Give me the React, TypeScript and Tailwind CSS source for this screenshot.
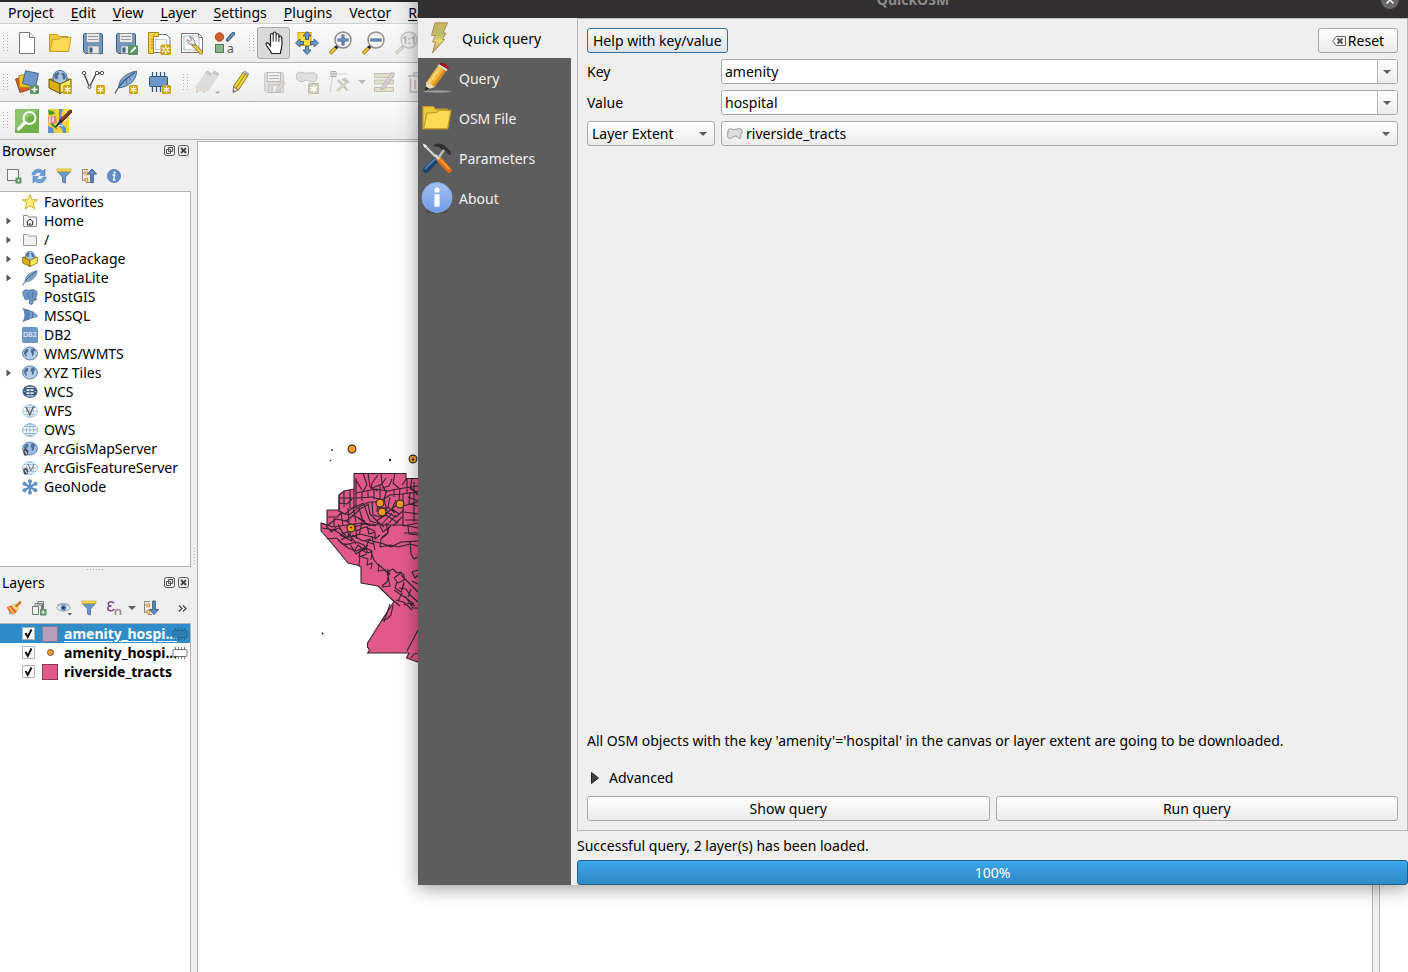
import React, { useState } from "react";

type P = { children?: React.ReactNode; size?: string; box?: string };

const Ico = ({ children, size = "size-6", box = "0 0 24 24" }: P) => (
  <svg viewBox={box} className={`${size} shrink-0`} fill="none" aria-hidden="true">
    {children}
  </svg>
);

/* Badges in the lower right corner of 24px icons */
const NewBadge = ({ c = "#c9a20e" }: { c?: string }) => (
  <g>
    <rect x="15" y="15" width="9" height="9" rx="1.5" fill={c} />
    <path d="M19.5 16.2v6.6M16.6 17.8l5.8 3.4M22.4 17.8l-5.8 3.4" stroke="#fff" strokeWidth="1.3" />
  </g>
);
const AddBadge = () => (
  <g>
    <rect x="15" y="15" width="9" height="9" rx="1.5" fill="#5b9163" />
    <path d="M19.5 16.5v6M16.5 19.5h6" stroke="#fff" strokeWidth="1.6" />
  </g>
);
const Floppy = ({ a = "#6c97c7", b = "#3f5f85", l = "#e8e8e8" }) => (
  <g>
    <path d="M3.5 2.5h17l1 1v19h-17l-2-2v-17z" fill={a} stroke={b} />
    <rect x="5.5" y="2.5" width="13" height="9" fill={l} stroke="#888" strokeWidth=".7" />
    <path d="M7 5.5h10M7 8.5h10" stroke="#999" strokeWidth="1.2" />
    <rect x="7" y="15" width="11" height="7.5" fill={l} stroke="#888" strokeWidth=".7" />
    <rect x="8.5" y="16.5" width="3" height="5" fill={b} />
  </g>
);
const Pen = ({ fill = "#f3d63a", edge = "#8a7a1c", tip = "#666" }) => (
  <g strokeLinejoin="round">
    <path d="M4.500 16.500L14 2.500l5 3L9.500 20z" fill={fill} stroke={edge} />
    <path d="M7 18L16.500 4" stroke={edge} strokeWidth="1" />
    <path d="M14 2.500l1.500-1.500 4 2.500-.5 2z" fill="#bcbcbc" stroke="#888" strokeWidth=".8" />
    <path d="M4.500 16.500L4 22.500 9.500 20z" fill="#e8d9b5" stroke={tip} strokeWidth=".8" />
    <path d="M4.300 20L4 22.800 6.500 21.500z" fill={tip} />
  </g>
);
const Lens = ({ c = "#f2f2f2", s = "#8a8a8a", h = "#f0c52c", d = "#222" }) => (
  <g>
    <path d="M2 22.500L8.500 16" stroke={d === "#222" ? "#7d6a1a" : "#c4c4c4"} strokeWidth="3.600" />
    <path d="M2.300 22.200L7.500 17" stroke={h} strokeWidth="2.200" />
    <path d="M7.500 17l2.500-2.500" stroke={d} strokeWidth="3" />
    <circle cx="15" cy="9" r="8" fill={c} stroke={s} strokeWidth="1.400" />
  </g>
);
/* Continents on a 16px globe */
const GlobeLand = () => (
  <path
    d="M2.500 4.500l2.500-1.700 1.700.7-.9 1.300.6 1-1.600.9-.8 1.500.9 1.300-.6 1.700-1.100-1.400L2 7.500zM9.300 2.800l2.500-.3 1.900 1.900-1 1.200-.9-.4.2 2.500-1.300 2.600-.9-1.300.1-2-1.300-.8z"
    fill="#4b6d96"
  />
);

const NewFile = () => (
  <Ico>
    <path d="M4.500 1.500h10l5 5v16h-15z" fill="#fff" stroke="#777" />
    <path d="M14.500 1.500v5h5" fill="#eee" stroke="#777" />
  </Ico>
);
const FolderArt = () => (
  <g>
    <path d="M1.500 3.500h8l1.500 2h9v15h-18.500z" fill="#f0c93c" stroke="#c49f28" />
    <path d="M4.500 8.500L12 8l1.500-1.500H23L20.500 20.500h-18.500z" fill="#fdda54" stroke="#c49f28" />
  </g>
);
const OpenFile = () => <Ico><FolderArt /></Ico>;
const Save = () => <Ico><Floppy /></Ico>;
const SaveAs = () => (
  <Ico>
    <Floppy />
    <rect x="14" y="14" width="10" height="10" rx="1.500" fill="#5b9163" />
    <path d="M16 22l1-2.500 4-4 1.500 1.500-4 4z" fill="#fff" />
  </Ico>
);
const Layout = () => (
  <Ico>
    <path d="M5.500 3.500h14l3.500 3.500v14.500h-17.500z" fill="#fff" stroke="#777" />
    <rect x="8.500" y="8.500" width="11" height="10" stroke="#b8c8e6" />
    <path d="M1.500 1.500h10v4h-5v17h-5z" fill="#f6d448" stroke="#a98a19" />
    <path d="M4 8h2.500M4 11h2.500M4 14h2.500M4 17h2.500M7 3.500v2" stroke="#a98a19" />
    <rect x="13.500" y="13.500" width="10.500" height="10.500" rx="1.500" fill="#c9a20e" />
    <path d="M18.700 14.500v8.500M15 16.600l7.400 4.300M22.400 16.600l-7.400 4.300" stroke="#fff" strokeWidth="1.500" />
    <circle cx="18.700" cy="18.700" r="1.200" fill="#c9a20e" />
  </Ico>
);
const LayoutMgr = () => (
  <Ico>
    <path d="M1.500 2.500h17l4 4v15h-21z" fill="#fff" stroke="#777" />
    <path d="M18.500 2.500v4h4" stroke="#777" />
    <rect x="4" y="5" width="15" height="14" stroke="#a9bde6" />
    <path d="M13 13l8 8.500" stroke="#8d7319" strokeWidth="4" strokeLinecap="round" />
    <path d="M14 14l7 7.500" stroke="#f0cd45" strokeWidth="2.400" strokeLinecap="round" />
    <path d="M9.500 5.500l3.500 1.500 1.500 3.500 1 4-3-1-3.500-.5L7 10.500l.5-2 2.500 2 1.500-1.500z" fill="#ececec" stroke="#777" strokeWidth=".9" />
  </Ico>
);
const Styles = () => (
  <Ico>
    <circle cx="6.500" cy="6" r="4.200" fill="#cf5f2f" stroke="#a54620" />
    <path d="M14.500 9L20.500 2.500" stroke="#3d5c80" strokeWidth="3.400" strokeLinecap="round" />
    <path d="M15 8.500L20.500 2.500" stroke="#6c97c7" strokeWidth="1.600" strokeLinecap="round" />
    <rect x="2.500" y="13.500" width="8" height="8" fill="#8ab38c" stroke="#4e7d52" />
    <text x="14" y="21.500" fontSize="12" fill="#555">a</text>
  </Ico>
);
const Hand = () => (
  <Ico>
    <path
      d="M8 22.500c-.500-2-2.500-4.500-5-8-1.500-2.500.5-3.500 2-2l2 2.500V4c0-2 2.500-2 2.700 0V2.500c0-2 2.700-2 2.900 0V4c.2-1.800 2.700-1.600 2.800.2v2c.4-1.500 2.600-1.300 2.800.3.300 3.500.8 7-.3 11-.5 1.500-.9 3-1 5z"
      fill="#fff" stroke="#222" strokeWidth="1.200" transform="translate(1.500 0)"
    />
    <path d="M11.200 4v6.500M14.100 4v6.500M16.900 6v5" stroke="#222" />
  </Ico>
);
const PanTo = () => (
  <Ico>
    <rect x="3" y="1.500" width="13" height="13" fill="#fdd93b" stroke="#c9a20e" />
    <path
      d="M12 .5l4 4.500h-2.500v3.500h-3V5H8zM12 23.500L8 19h2.500v-3.500h3V19H16zM.500 12L5 8v2.500h3.500v3H5V16zM23.500 12L19 16v-2.500h-3.500v-3H19V8z"
      fill="#6c97c7" stroke="#34567c" strokeWidth=".9"
    />
  </Ico>
);
const ZoomIn = () => (
  <Ico><Lens /><path d="M15 3.500v11M9.500 9h11" stroke="#34608f" strokeWidth="3" /><path d="M15 4v10M10 9h10" stroke="#6c97c7" strokeWidth="1.400" /></Ico>
);
const ZoomOut = () => (
  <Ico><Lens /><path d="M9.500 9h11" stroke="#34608f" strokeWidth="3" /><path d="M10 9h10" stroke="#6c97c7" strokeWidth="1.400" /></Ico>
);
const ZoomNative = () => (
  <Ico><Lens c="#efefef" s="#c6c6c6" h="#e2ddc8" d="#c4c4c4" /><text x="8" y="12.500" fontSize="10" fontWeight="700" fill="#b4b4b4">1:1</text></Ico>
);
const DataSource = () => (
  <Ico>
    <path d="M.500 9l9-2 5 12.500-9.500 3z" fill="#d2602f" stroke="#9c4520" />
    <path d="M4 5.500l10-1.500 1.500 13-11 .5z" fill="#f3cb27" stroke="#a98a19" />
    <path d="M10.500.800L23.500 3.500 20.500 17 7.500 13.500z" fill="#6c97c7" stroke="#44658c" />
    <AddBadge />
  </Ico>
);
const BoxArt = () => (
  <g>
    <path d="M1 9l11-3 11 3-11 5z" fill="#a98a19" />
    <circle cx="12" cy="7.500" r="7" fill="#a8c4e4" stroke="#53759d" />
    <path d="M7 3.500l3.500-1.500 1 2-2 2 1 2-2.500 1.500-2-3zM14 2.500l2.500 1 1.500 3.500-2 3-1.500-2 .5-2-2-1.500z" fill="#4b6d96" />
    <path d="M1 9l11 5v9.500L1 18z" fill="#d9ae12" stroke="#66540c" />
    <path d="M23 9l-11 5v9.500L23 18z" fill="#fbec5a" stroke="#66540c" />
  </g>
);
const NewGeoPackage = () => <Ico><BoxArt /><NewBadge /></Ico>;
const NewShape = () => (
  <Ico>
    <path d="M3 3.500L8.500 17 15.500 3h5" stroke="#39424e" strokeWidth="1.300" />
    <circle cx="3" cy="3" r="1.700" fill="#fff" stroke="#555" />
    <circle cx="8.500" cy="17" r="1.600" fill="#fff" stroke="#555" />
    <circle cx="16" cy="3" r="1.700" fill="#fff" stroke="#555" />
    <circle cx="21" cy="3" r="1.700" fill="#fff" stroke="#555" />
    <NewBadge />
  </Ico>
);
const FeatherArt = () => (
  <g>
    <path d="M5 18C4 10 11 3.500 22.500 1 23 8 17 15 9 17z" fill="#86abd3" stroke="#44658c" />
    <path d="M1 23.500C4 17 10 9 21 2.500" stroke="#34567c" strokeWidth="1.200" />
    <path d="M12 9l1 5M15 6.500l2 4" stroke="#44658c" strokeWidth=".8" />
  </g>
);
const NewSpatiaLite = () => <Ico><FeatherArt /><NewBadge /></Ico>;
const NewMemory = () => (
  <Ico>
    <path d="M5.500 2v20M9.500 2v20M13.500 2v20M17.500 2v20" stroke="#34567c" strokeWidth="1.300" />
    <rect x="2.500" y="6.500" width="18" height="10" rx="1" fill="#6c97c7" stroke="#34567c" />
    <NewBadge />
  </Ico>
);
const EditsGray = () => (
  <Ico>
    <g opacity=".6">
      <g transform="translate(-4 0)"><Pen fill="#d8d0d0" edge="#c9c1c1" tip="#bbb" /></g>
      <g transform="translate(3 0)"><Pen fill="#d8d0d0" edge="#c9c1c1" tip="#bbb" /></g>
    </g>
    <path d="M19 21.500h5l-2.500 2.500z" fill="#aaa" />
  </Ico>
);
const EditYellow = () => <Ico><Pen /></Ico>;
const SaveGray = () => (
  <Ico>
    <g opacity=".7"><Floppy a="#d3d3d3" b="#bdbdbd" l="#efefef" /></g>
    <path d="M13 23l1.500-4 6-8 2.500 2-6 8z" fill="#ded4d0" stroke="#c4bab8" strokeWidth=".8" />
  </Ico>
);
const PolyGray = () => (
  <Ico>
    <path d="M1.500 5c1-3.500 5-3 8-2 4 1 9-2 12 1.500 1.500 3-.5 7.500-3.500 7.500-4 0-5-3-9-1C5 13 .5 10 1.500 5z" fill="#dde0dd" stroke="#bcc0bc" />
    <rect x="13.500" y="13.500" width="10.500" height="10.500" rx="1.500" fill="#d0ccb8" stroke="#bdb9a6" />
    <path d="M18.700 15v7.500M15.500 17l6.400 3.700M21.900 17l-6.400 3.700" stroke="#fff" strokeWidth="1.500" />
  </Ico>
);
const VertexGray = () => (
  <Ico>
    <path d="M7 4h12M5 6L2 22" stroke="#cfcfcf" />
    <path d="M3 1.500h5v5H3z" fill="#eee" stroke="#aaa" />
    <circle cx="5.500" cy="4" r="1" stroke="#999" strokeWidth=".8" />
    <path d="M10 10l9.500 10.500" stroke="#c5c5b8" strokeWidth="2.400" />
    <path d="M9 21l9-8" stroke="#d6d3bf" strokeWidth="3" />
    <path d="M13 9.500l4-2 5 5-3 1z" fill="#c9c9c2" />
  </Ico>
);
const AttrGray = () => (
  <Ico>
    <path d="M1.500 3.500h19v4h-19zM1.500 10h19v4h-19zM1.500 17.500h19v4h-19z" fill="#e2dfcb" stroke="#c3c0ad" />
    <path d="M8 20l1-4L19 2l3 2L12 18z" fill="#d8d0cf" stroke="#b8b2b0" strokeWidth=".8" />
  </Ico>
);
const TrashGray = () => (
  <Ico>
    <path d="M2 6h20M8 6V3h8v3M4.500 8v14h15V8M9 10v9M13 10v9" stroke="#cdbcbc" strokeWidth="1.600" />
  </Ico>
);
const QuickSearch = () => (
  <Ico>
    <rect width="24" height="24" fill="#6fb04a" />
    <path d="M0 0h24L0 20z" fill="#8cc46a" />
    <circle cx="14.500" cy="9" r="6" stroke="#fff" strokeWidth="2" />
    <path d="M10 13.500L3.500 20" stroke="#fff" strokeWidth="3.200" strokeLinecap="round" />
  </Ico>
);
const OsmMap = () => (
  <Ico>
    <rect width="21" height="24" fill="#f7cf3f" />
    <path d="M11 0h4l-2 6 3 4-3 4 5 5v5h-3l-1-4-5-4 2-5zM0 17l5 2 1 5H0z" fill="#5b8fd6" />
    <path d="M0 1l5 1 2 3-6 1zM1 12l5 3 4 6-6-4z" fill="#3f9a3a" />
    <path d="M0 8l8-1 1 7-8 1z" fill="#d87f92" />
    <path d="M2 8v6M5 8v5M10 16l5 1M17 2l3 5M14 13l5-3" stroke="#fff" strokeWidth="1.200" />
    <path d="M22.500 2.500L13 12" stroke="#5c2408" strokeWidth="3.600" strokeLinecap="round" />
    <path d="M22 2.500L14 10.500" stroke="#98441a" strokeWidth="1.600" strokeLinecap="round" />
    <path d="M13.500 11.500L7.500 18" stroke="#222" strokeWidth="1.600" />
  </Ico>
);

/* 16px panel and tree icons */
const S = ({ children }: P) => <Ico size="size-4" box="0 0 16 16">{children}</Ico>;
const AddLayer = () => (
  <S><rect x="1.500" y="1.500" width="11" height="11" fill="#f4f4f4" stroke="#777" /><rect x="9.500" y="9.500" width="6" height="6" rx="1" fill="#5b9163" /><rect x="11.500" y="11.500" width="2" height="2" fill="#fff" /></S>
);
const Refresh = () => (
  <S>
    <path d="M1 7c0-5 7-8 11-4l2-2v6.500H8.500l2-2C8 3.500 4 4.500 4 7z" fill="#6c9fd8" stroke="#4a7db5" strokeWidth=".6" />
    <path d="M15 9c0 5-7 8-11 4l-2 2V8.500h5.500l-2 2C8 12.500 12 11.500 12 9z" fill="#6c9fd8" stroke="#4a7db5" strokeWidth=".6" />
  </S>
);
const Funnel = () => (
  <S>
    <path d="M1.500 3.500h13L9.500 9v6l-3-1V9z" fill="#6c97c7" stroke="#4a6f9a" strokeWidth=".8" />
    <rect x="1" y="1" width="14" height="2.600" fill="#f7dc55" stroke="#c9a20e" strokeWidth=".6" />
  </S>
);
const TreeArrow = ({ down = false }: { down?: boolean }) => (
  <S>
    <path d="M1.500 2v11M1.500 5h3M1.500 12h3M1 1.500h6M5 14.500h4" stroke="#8a8a8a" />
    <rect x="4" y="4" width="2.600" height="2.600" fill="#fff" stroke="#f0932b" strokeWidth="1.200" />
    <rect x="4" y="10.500" width="2.600" height="2.600" fill="#fff" stroke="#f0932b" strokeWidth="1.200" />
    <path d={down ? "M9.700 1h2.600v8.500H15.500L11 14.500 6.500 9.500h3.200z" : "M9.700 14.500h2.600V6H15.500L11 1 6.500 6h3.200z"} fill="#5f8fc6" stroke="#2f5179" strokeWidth=".9" />
  </S>
);
const InfoSmall = () => (
  <S><circle cx="8" cy="8" r="6.500" fill="#5d8fcb" stroke="#4672a8" strokeWidth=".8" /><circle cx="8.600" cy="4.600" r="1.100" fill="#fff" /><path d="M6.500 7h2.300L7.500 12h1.800" stroke="#fff" strokeWidth="1.300" /></S>
);
const Star = () => (
  <S><path d="M8 .5l2.100 5.200h5.500l-4.400 3.400 1.700 5.900L8 11.700 3.100 15l1.700-5.900L.400 5.700h5.500z" fill="#fdf07a" stroke="#c9a81c" strokeWidth=".9" /></S>
);
const FolderHome = () => (
  <S><path d="M1.500 2.500h4l1 1.500h8v9.500h-13z" fill="#f4f4f4" stroke="#8c8c8c" /><path d="M4.500 9L8 6l3.500 3M5.500 8.500V12h5V8.500" stroke="#333" /><path d="M8 10v2" stroke="#333" /></S>
);
const Folder = () => <S><path d="M1.500 2.500h4l1 1.500h8v9.500h-13z" fill="#f1f1f1" stroke="#9a9a9a" /></S>;
const GeoPkg = () => <Ico size="size-4"><BoxArt /></Ico>;
const Feather = () => <Ico size="size-4"><FeatherArt /></Ico>;
const PostGIS = () => (
  <S>
    <path d="M1 3c1-3 5-2 6-1.500 2-1 7-1.500 8 2 .3 2.500-1 5-2 6.500h2c-1 1.500-3 1.500-4 1v3c-.500 2-3.500 1.500-3.500 0V11L5.500 10c-1 1.500-2.500 1-3-1C1.500 7 .5 5 1 3z" fill="#6c97c7" stroke="#44658c" strokeWidth=".8" />
    <path d="M6 3.500C5.500 6 6 8 7.500 9M10.500 3c1 2 .5 4-.5 6" stroke="#44658c" strokeWidth=".8" />
  </S>
);
const MSSQL = () => (
  <S>
    <path d="M1 .5L6 2c2 3.500 1.500 6.500 0 9.500l-5 2C3.500 9.500 3.500 5 1 .5z" fill="#5b86b8" stroke="#3f6490" strokeWidth=".6" />
    <path d="M6 2l4 1.500c1 2.500 1 4.500 0 6.500l-4 1.500C7.500 8.500 8 5.500 6 2zM10 3.500c3 1 4.500 3 5.500 5L10 10c1-2 1-4 0-6.500z" fill="#7ba3d0" stroke="#3f6490" strokeWidth=".6" />
  </S>
);
const DB2 = () => (
  <S><rect width="16" height="16" rx="1.500" fill="#6c97c7" /><text x="1" y="10" fontSize="7" fill="#fff">DB2</text></S>
);
const GlobeMap = () => (
  <S>
    <ellipse cx="8" cy="7.500" rx="7.500" ry="6.500" fill="#b4cce8" stroke="#53759d" strokeWidth=".9" />
    <GlobeLand />
  </S>
);
const Grid = ({ c = "#6c97c7" }) => (
  <g stroke={c} strokeWidth=".9">
    <ellipse cx="8" cy="8" rx="7.400" ry="6.300" />
    <ellipse cx="8" cy="8" rx="3.500" ry="6.300" />
    <path d="M8 1.700v12.600M.6 8h14.800M2 4.500h12M2 11.500h12" />
  </g>
);
const WCS = () => (
  <S>
    <ellipse cx="8" cy="7.500" rx="7.500" ry="6.500" fill="#3f5b7c" />
    <path d="M4.500 3.300h7M4.500 11.800h7" stroke="#c9dcf2" strokeWidth="1.300" />
    <path d="M4.500 5.300h3v1.800h-3zM8.500 5.300h3v1.800h-3zM4.500 8.200h3V10h-3zM8.500 8.200h3V10h-3z" fill="#e6effa" />
    <path d="M1.500 7.600h2M12.500 7.600h2" stroke="#83abda" />
  </S>
);
const WFS = () => <S><Grid c="#9dbce0" /><path d="M4 4l4 8 3-8h2" stroke="#555" strokeWidth="1.200" /></S>;
const OWS = () => <S><Grid c="#83abda" /></S>;
const ArcMap = () => (
  <S><ellipse cx="8" cy="7.500" rx="7.500" ry="6.500" fill="#9dbce0" stroke="#53759d" strokeWidth=".8" /><GlobeLand /><path d="M1 9.500l3-2 2.500 2.500-1 4.500H2z" fill="#44525f" /><path d="M3 10l2 3" stroke="#fff" /></S>
);
const ArcFeat = () => (
  <S><Grid c="#9dbce0" /><path d="M6 4l3 7 3-7" stroke="#777" /><path d="M1 9.500l3-2 2.500 2.500-1 4.500H2z" fill="#44525f" /><path d="M3 10l2 3" stroke="#fff" /></S>
);
const GeoNode = () => (
  <S>
    <path d="M8 2v12M3 5l10 6M13 5L3 11" stroke="#5f8fc6" strokeWidth="2.200" />
    <g fill="#5f8fc6"><circle cx="8" cy="2.200" r="2" /><circle cx="8" cy="13.800" r="2" /><circle cx="2.500" cy="4.800" r="2" /><circle cx="13.500" cy="4.800" r="2" /><circle cx="2.500" cy="11.200" r="2" /><circle cx="13.500" cy="11.200" r="2" /></g>
  </S>
);
const Brush = () => (
  <S>
    <path d="M1 7l4-1.500L11 12l-4 2.500C4 13 2 11 1 7z" fill="#e05a4a" />
    <path d="M2 7.500l5 6.500 2-1-5-6z" fill="#f3cb27" />
    <path d="M3 12l3 2.500-3-.500z" fill="#6c97c7" />
    <path d="M6 5.500L9 4l3.500 3.500L11 11z" fill="#f5e087" stroke="#c9a20e" strokeWidth=".5" />
    <path d="M10.500 6L14 2.500" stroke="#c97c28" strokeWidth="2.600" strokeLinecap="round" />
  </S>
);
const AddGroup = () => (
  <S><path d="M1.500 6.500h6v8h-6zM4 6V3.500h7.500V11M7 3V1.500h3.500M5.500 5h5v7" stroke="#6d7a78" /><path d="M7 1.500h5.500v9" stroke="#6d7a78" /><rect x="9" y="9" width="6.500" height="6.500" rx="1" fill="#5b9163" /><path d="M12.200 10.200v4M10.200 12.200h4" stroke="#fff" /></S>
);
const Eye = () => (
  <S><path d="M.500 8C4 3 11 3 14.500 8 11 12 4 12 .500 8z" fill="#eef3f8" stroke="#7d8c99" strokeWidth=".8" /><path d="M1 5.500C5 2.500 10 2.500 14 5.500" stroke="#9aa7b2" /><circle cx="7.500" cy="7.700" r="3" fill="#5f8fc6" /><circle cx="7.500" cy="7.700" r="1.300" fill="#223" /><path d="M11.500 13h4.500l-2.200 2.500z" fill="#555" /></S>
);
const Epsilon = () => (
  <S><path d="M8 3.200C6.500 1 2 1.500 2.300 4c.2 1.500 1.500 2 3.200 2C3 6 1.500 7 1.700 8.700 2 11.500 7 11.500 8.300 9" stroke="#74407f" strokeWidth="1.400" /><path d="M9.500 15v-3.500c0-2.500 5-2.500 5 0V15" stroke="#999" strokeWidth="1.800" /></S>
);
const Chip = ({ c = "#555", f = "#fff" }: { c?: string; f?: string }) => (
  <svg viewBox="0 0 16 12" className="h-3 w-4 shrink-0" fill="none" aria-hidden="true">
    <path d="M3.500 0v12M6.500 0v12M9.500 0v12M12.500 0v12" stroke={c} />
    <rect x="1" y="2.500" width="14" height="7" rx="1" fill={f} stroke={c} />
  </svg>
);

/* 32px dialog page icons */
const B = ({ children, w = "w-8" }: P & { w?: string }) => (
  <svg viewBox="0 0 32 32" className={`h-8 ${w} shrink-0`} fill="none" aria-hidden="true">{children}</svg>
);
const Bolt = () => (
  <B w="w-[35px]">
    <defs><linearGradient id="bolt" x1="0" y1="0" x2="0" y2="1"><stop offset="0" stopColor="#cdb45e" /><stop offset=".4" stopColor="#b9bd6a" /><stop offset=".6" stopColor="#e2dc6c" /><stop offset="1" stopColor="#c08a55" /></linearGradient></defs>
    <path d="M12.500.800H25L20.500 11h3L20 17.500h2L10 31 13 20h-3l3-6.500H9z" fill="url(#bolt)" stroke="#b08a5c" />
  </B>
);
const PencilBig = () => (
  <B>
    <ellipse cx="16" cy="29.500" rx="14" ry="1.200" fill="#9b9b9b" />
    <path d="M5.500 20L17 3.500l8 5L13.500 25z" fill="#f2b53a" />
    <path d="M8 21L19.500 5" stroke="#fbd57a" strokeWidth="2.500" />
    <path d="M12.500 24.500L24 8" stroke="#d88e17" strokeWidth="2.500" />
    <path d="M5.500 19.500l8.500 5.500-9.500 3z" fill="#f1dcb4" />
    <path d="M4.800 24.500l3.500 2.300-4.500 1.700z" fill="#222" />
    <path d="M17 3.500l1.500-2.300 9 5L25.500 9z" fill="#e8e3e3" />
    <path d="M18.500 2C20-.3 28.500 3.500 27 7z" fill="#b9121c" stroke="#8d0d15" />
  </B>
);
const FolderBig = () => <B><g transform="scale(1.300)"><FolderArt /></g></B>;
const Tools = () => (
  <B>
    <path d="M12 4c4-4 10-3 13 1l4 4 1 4-3-1-2-3-3 0-4-4z" fill="#2d3234" />
    <path d="M3 3l14 14" stroke="#d6d6d6" strokeWidth="2.200" />
    <path d="M1.500 1.500L6 3.500 4 6z" fill="#eee" />
    <path d="M16 17L5 28" stroke="#1d3f6b" strokeWidth="6" strokeLinecap="round" />
    <path d="M14 17L4.500 26.500" stroke="#4a80bd" strokeWidth="2" strokeLinecap="round" />
    <path d="M18 17l10 11" stroke="#e86b0c" strokeWidth="5.500" strokeLinecap="round" />
    <path d="M18 16l9.500 10.500" stroke="#fba04c" strokeWidth="1.800" strokeLinecap="round" />
    <path d="M14 13l4 4" stroke="#ddd" strokeWidth="2.500" />
    <path d="M17.500 15.500L23 8" stroke="#b8bcbe" strokeWidth="2.500" />
  </B>
);
const InfoBig = () => (
  <B>
    <defs><linearGradient id="info" x1="0" y1="0" x2="0" y2="1"><stop offset="0" stopColor="#a3c0f2" /><stop offset="1" stopColor="#6f9be6" /></linearGradient></defs>
    <ellipse cx="16" cy="29.500" rx="12" ry="2" fill="#4a4a4a" />
    <circle cx="16" cy="15.500" r="15" fill="url(#info)" stroke="#86a9ea" />
    <circle cx="16" cy="8" r="2.600" fill="#fff" />
    <path d="M13.800 12.500h4.400v12h-4.400z" fill="#fff" stroke="#dfe8fa" />
  </B>
);
const Caret = () => (
  <svg viewBox="0 0 8 4" className="h-1 w-2 shrink-0" aria-hidden="true"><path d="M0 0h8L4 4z" fill="#5c5c5c" /></svg>
);

const Handle = ({ wide = false }: { wide?: boolean }) => (
  <span className={`${wide ? "w-4 pl-2" : "w-[10px] pl-[3px]"} flex shrink-0`}>
    <svg viewBox="0 0 5 17" className="h-[17px] w-[5px]" aria-hidden="true">
      <path d="M.5 0v17M4.500 0v17" stroke="#aaa" strokeDasharray="1 2" />
    </svg>
  </span>
);
const Tool = ({ label, on = false, children }: P & { label: string; on?: boolean }) => (
  <button
    type="button"
    aria-label={label}
    className={`flex h-8 w-[33px] shrink-0 items-center justify-center rounded-[3px] ${on ? "border border-[#a8a8a8] bg-[#dadada]" : ""}`}
  >
    {children}
  </button>
);
const Bar = ({ children, h = "h-[39px]" }: P & { h?: string }) => (
  <div className={`flex ${h} shrink-0 items-center border-b border-[#b4b4b4] bg-gradient-to-b from-[#fafafa] to-[#ededed]`}>
    {children}
  </div>
);

const menus = ["Pro|j|ect", "|E|dit", "|V|iew", "|L|ayer", "|S|ettings", "|P|lugins", "Vect|o|r", "|R|aster"];

const browser: { name: string; icon: React.FC; open?: boolean }[] = [
  { name: "Favorites", icon: Star },
  { name: "Home", icon: FolderHome, open: true },
  { name: "/", icon: Folder, open: true },
  { name: "GeoPackage", icon: GeoPkg, open: true },
  { name: "SpatiaLite", icon: Feather, open: true },
  { name: "PostGIS", icon: PostGIS },
  { name: "MSSQL", icon: MSSQL },
  { name: "DB2", icon: DB2 },
  { name: "WMS/WMTS", icon: GlobeMap },
  { name: "XYZ Tiles", icon: GlobeMap, open: true },
  { name: "WCS", icon: WCS },
  { name: "WFS", icon: WFS },
  { name: "OWS", icon: OWS },
  { name: "ArcGisMapServer", icon: ArcMap },
  { name: "ArcGisFeatureServer", icon: ArcFeat },
  { name: "GeoNode", icon: GeoNode },
];

const DockTitle = ({ title }: { title: string }) => (
  <div className="flex h-[21px] shrink-0 items-center gap-[3px] pl-[2px] pr-[2px]">
    <h2 className="flex-1">{title}</h2>
    <button type="button" aria-label={`Float ${title}`} className="size-[11px]">
      <svg viewBox="0 0 11 11" fill="none" className="size-[11px]"><rect x=".5" y=".5" width="10" height="10" rx="2" stroke="#555" /><path d="M4.500 2.500h4v4h-4zM2.500 4.500h4v4h-4z" stroke="#555" /></svg>
    </button>
    <button type="button" aria-label={`Close ${title}`} className="size-[11px]">
      <svg viewBox="0 0 11 11" fill="none" className="size-[11px]"><rect x=".5" y=".5" width="10" height="10" rx="2" stroke="#555" /><path d="M3 3l5 5M8 3L3 8" stroke="#444" strokeWidth="1.800" /></svg>
    </button>
  </div>
);
const Small = ({ label, children }: P & { label: string }) => (
  <button type="button" aria-label={label} className="flex h-5 w-[25px] shrink-0 items-center justify-center">{children}</button>
);

const LayerRow = ({ name, swatch, sel = false, chip = false }: { name: string; swatch: React.ReactNode; sel?: boolean; chip?: boolean }) => {
  const [on, setOn] = useState(true);
  return (
    <li className={`flex h-[19px] items-center pr-[2px] pl-[22px] font-bold ${sel ? "bg-[#308cc6] text-white" : "text-black"}`}>
      <label className="flex min-w-0 flex-1 items-center">
        <span className="grid size-[13px] shrink-0">
          <input type="checkbox" checked={on} onChange={() => setOn(!on)} className="col-start-1 row-start-1 size-[13px] appearance-none border border-[#b4b4b4] bg-white" />
          {on && (
            <svg viewBox="0 0 13 13" fill="none" className="pointer-events-none col-start-1 row-start-1 size-[13px]"><path d="M3.500 6l2.300 4L9.500 2.500" stroke="#111" strokeWidth="2" /></svg>
          )}
        </span>
        <span className="ml-[7px] flex size-4 shrink-0 items-center justify-center">{swatch}</span>
        <span className={`ml-[6px] whitespace-nowrap ${sel ? "underline underline-offset-2" : ""}`}>{name}</span>
      </label>
      {chip && <span className="-ml-4 flex opacity-80">{sel ? <Chip c="#26608c" f="#2f7bb0" /> : <Chip />}</span>}
    </li>
  );
};

const line = { stroke: "#32242c", strokeWidth: 1.1, strokeLinejoin: "round" as const, fill: "none" };
const MapView = () => (
  <svg viewBox="198 142 260 560" className="h-[560px] w-[260px]" aria-label="Map of riverside_tracts">
    <path
      d="M354 473.500h52v5h50V676L418 662l-11.500-4 2.500-5h-41.500l2-3-2-3v-4L382 620l12-18.500L378 586l-17-3v-16l-4-2-9-2-18-22-9-10v-8l6 2v-15h12v-15l5-4 10-2z"
      {...line} fill="#e15989"
    />
    <g {...line}>
      <path d="M354 489v20M356 478v30M339 495v17M344 491v16M350 490v18M339 503l8 1 5-5M340 498h14M356 480l6 10M363 473l4 12-5 8M368 473l2 14 8 4M378 475l-6 8-1 6M381 473l1 11-10 4M386 478l-4 6 4 8M392 479l-3 7-7 2M395 473l-2 10 7 6M402 485l5-7M356 493l20-4 12 2 16-3 14-2M356 498l16-1 10 3 8-5 12-1 16-2M362 493v8M368 490v8M374 490v9M380 485v15M387 490l-3 9M394 489v8M400 488l-1 12M407 479v14M412 479l-2 10 8 3" />
      <path d="M327 517h10l4-4 8 2 10-8 10-5 12 0M339 511l6 3 7-6 12-5M328 525l8-6 10 2 8-6 6-6 9-5M334 518v8M341 513l2 12M348 508l1 14M353 507l3 15M359 508l4 14M364 505l6 16 10 3M358 518l12 8M345 520l9 7 10-3 12 2M352 515l13 6M368 504l2 10 8 8 6 5M372 502l1 13M378 500l-1 12M384 499l3 12M390 497l-2 10 7 6M396 500l-4 9 7 5M373 515l7 2 8-4 8 4 8-7M376 521l10-6 12 8M382 524l10-11M387 525l9-10M393 526l9-9M378 508l10 0M385 514l16-12M403 494v32M410 492l-1 12 9 2M403 506l15-4M404 512l14 2M405 520h13M403 526l15-3M410 487l8 8M408 497l10 4M414 482v40" />
      <path d="M321 523l12 4 14-2 14-2 18 2 24 0 15 3M322 528l12 2 13 8 13-4 16 4M326 526l6 6 4-5M330 532l9-4 7 8M338 524l5 10 8-4M340 535l12 6-3-12M347 525l2 13M355 523l2 16M362 523l-3 12M352 535l11 6 8-2M356 531l9-4 10 4M341 540l9-5 6 9M345 545l11-3 8 3M367 526l2 8 6-2v7l5-4M365 541l8 3M372 536l3 14M391 526l-8 6-3-6M386 523l2 10-6 4M327 539l10-1 5 6 8 0 6 10 6-4 5 3" />
      <path d="M389 527l-2 7-6 5-1 8 10-2 8 2 12-3 8 2M408 526l1 8 9 1M404 533h14M338 540l10 8 8 3 10-4 3-7 6 2M355 550l3-5 6 5 4-5M358 553l8-5 6 3-1 9M360 551l-1 6 8-3M364 545l4 8 4-2M359 565l1-9 8 3-1 6 5-2-1 6M372 541l12 3 7 3 10-5 17-1M371 552l3 8 5 6-1 5 6-1 6 4-3-5M410 542l1 12 3 5 4-2M378 564l9 8 3 14-8 1M387 572l6-3 4 4 5-1M382 586l5-4 2-10M418 570l-6 2 3 6 3-3" />
      <path d="M394 578l7-5 3 2v5l-6 3-4-5M397 582l-2 6 6 4 3-8M401 575l7 7 6 6 4 4M399 588l7 1 4 6 8 7M404 582l-2 7M394 590l6 4 6 4 8 6M402 593l-4 8M396 600l7 2 5 4 4 4M405 596l8 12h5M411 589l-3 8M404 605l6-2 5 3M418 584l-6-3M390 604l-6 18M394 601l6 5M393 605l-2 10-4 4-5 1M407 651l11-21" />
      <path d="M411 658l3-4 5-1" />
    </g>
    <g fill="#222">
      <circle cx="332" cy="450" r=".9" /><circle cx="330.500" cy="460.500" r=".8" /><circle cx="390" cy="460" r="1.200" /><circle cx="322.500" cy="633.500" r="1" />
    </g>
    <g fill="#ff9a1c" stroke="#2c2c2c" strokeWidth="1.100">
      {[[352, 449], [413, 459], [380, 503], [400, 504], [382, 512], [351, 528]].map(([x, y]) => (
        <circle key={`${x}-${y}`} cx={x} cy={y} r="3.900" />
      ))}
    </g>
    <g fill="#333"><circle cx="413" cy="459.500" r="1.200" /><circle cx="351" cy="527.500" r="1" /></g>
  </svg>
);

const btn = "rounded-[3px] border border-[#a9a9a9] bg-gradient-to-b from-[#fefefe] to-[#ececec]";

const Combo = ({ id, value }: { id: string; value: string }) => (
  <div className="flex h-[25px] rounded-[3px] border border-[#a9a9a9] bg-white">
    <input id={id} defaultValue={value} className="min-w-0 flex-1 rounded-l-[3px] bg-white px-[3px] outline-none" />
    <button type="button" aria-label={`Choose ${id}`} className="flex w-5 items-center justify-center rounded-r-[2px] border-l border-[#b9b9b9] bg-gradient-to-b from-[#fefefe] to-[#ececec] pr-[2px]">
      <Caret />
    </button>
  </div>
);

const pages: { name: string; icon: React.FC }[] = [
  { name: "Quick query", icon: Bolt },
  { name: "Query", icon: PencilBig },
  { name: "OSM File", icon: FolderBig },
  { name: "Parameters", icon: Tools },
  { name: "About", icon: InfoBig },
];

const Dialog = () => {
  const [page, setPage] = useState("Quick query");
  return (
    <section aria-label="QuickOSM" className="absolute -top-[19px] right-0 bottom-[87px] left-[418px] flex flex-col bg-[#efefef] shadow-[0_3px_18px_rgba(0,0,0,0.4)]">
      <header className="flex h-[37px] shrink-0 items-center bg-[#322f30] pr-[9px] pl-[9px]">
        <h1 className="flex-1 pl-[18px] text-center font-bold text-[#8c8a88]">QuickOSM</h1>
        <button type="button" aria-label="Close" className="flex size-[18px] items-center justify-center rounded-full bg-[#686667]">
          <svg viewBox="0 0 10 10" className="size-[10px]"><path d="M1.500 1.500l7 7M8.500 1.500l-7 7" stroke="#fff" strokeWidth="1.500" /></svg>
        </button>
      </header>
      <div className="flex min-h-0 flex-1">
        <nav className="flex w-[153px] shrink-0 flex-col bg-[#5d5d5d]">
          {pages.map(({ name, icon: Icon }) => (
            <button
              key={name}
              type="button"
              onClick={() => setPage(name)}
              className={`flex h-10 items-center gap-[6px] pl-[3px] text-left ${page === name ? "bg-[#efefef] text-black" : "text-[#f2f2f2]"}`}
            >
              <Icon />
              {name}
            </button>
          ))}
        </nav>
        <div className="flex min-w-0 flex-1 flex-col pl-[6px]">
          <div className="flex flex-1 flex-col border border-[#b8b8b8] p-[9px]">
            <div className="flex justify-between">
              <button type="button" className="h-[25px] rounded-[3px] border border-[#2f6f9f] bg-gradient-to-b from-[#f3f6f9] to-[#dde4ea] px-[5px]">Help with key/value</button>
              <button type="button" className={`${btn} flex h-[25px] w-20 items-center justify-center gap-[2px]`}>
                <svg viewBox="0 0 14 10" fill="none" className="h-[10px] w-[14px]"><path d="M4 .5h9.500v9H4L.700 5z" stroke="#666" /><path d="M5.500 2.500l5 5M10.500 2.500l-5 5" stroke="#555" strokeWidth="2" /></svg>
                Reset
              </button>
            </div>
            <div className="mt-[6px] grid grid-cols-[128px_1fr] items-center gap-[6px]">
              <label htmlFor="key">Key</label>
              <Combo id="key" value="amenity" />
              <label htmlFor="value">Value</label>
              <Combo id="value" value="hospital" />
              <div className={`${btn} flex h-[25px] items-center pr-[7px]`}>
                <select aria-label="Extent type" className="min-w-0 flex-1 appearance-none bg-transparent pl-1 outline-none"><option>Layer Extent</option></select>
                <Caret />
              </div>
              <div className={`${btn} flex h-[25px] items-center pr-[7px] pl-[5px]`}>
                <svg viewBox="0 0 16 12" className="h-3 w-4 shrink-0"><path d="M1 3c.5-3 3-2 5-1.500 2 .5 5-1.500 8-.5 2 1.500 1 4 0 5s1 4-1 4.500c-2 0-2.500-2.500-4.500-2.500S4 11 2 10.500C0 9 .7 6 1 3z" fill="#ddd" stroke="#999" /></svg>
                <select aria-label="Extent layer" className="min-w-0 flex-1 appearance-none bg-transparent pl-[3px] outline-none"><option>riverside_tracts</option></select>
                <Caret />
              </div>
            </div>
            <p className="mt-auto mb-3 flex h-[25px] items-center">All OSM objects with the key 'amenity'='hospital' in the canvas or layer extent are going to be downloaded.</p>
            <button type="button" className="mb-[6px] flex h-[25px] items-center gap-[10px] pl-1 text-left">
              <svg viewBox="0 0 8 12" className="h-3 w-2"><path d="M.5.5L7.500 6 .5 11.500z" fill="#444" stroke="#222" /></svg>
              Advanced
            </button>
            <div className="grid grid-cols-2 gap-[6px]">
              <button type="button" className={`${btn} h-[25px]`}>Show query</button>
              <button type="button" className={`${btn} h-[25px]`}>Run query</button>
            </div>
          </div>
          <p className="flex h-[29px] shrink-0 items-center">Successful query, 2 layer(s) has been loaded.</p>
          <div role="progressbar" aria-valuenow={100} className="flex h-[25px] shrink-0 items-center justify-center rounded-[3px] border border-[#1f608f] bg-gradient-to-b from-[#3ca6ec] to-[#2f89c4] text-white">100%</div>
        </div>
      </div>
    </section>
  );
};

export default function App() {
  return (
    <div className="relative flex h-screen flex-col overflow-hidden bg-[#efefef] font-['Noto_Sans',sans-serif] text-[14px] leading-[19px] text-black">
      <div className="h-[2px] shrink-0 bg-[#2b2828]" />
      <nav className="flex h-[22px] shrink-0 items-center gap-[17px] border-b border-[#d0d0d0] pl-2">
        {menus.map((m) => {
          const [a, k, b] = m.split("|");
          return (
            <button key={m} type="button" className="shrink-0">
              {a}<span className="underline underline-offset-2">{k}</span>{b}
            </button>
          );
        })}
      </nav>
      <Bar>
        <Handle />
        <Tool label="New project"><NewFile /></Tool>
        <Tool label="Open project"><OpenFile /></Tool>
        <Tool label="Save project"><Save /></Tool>
        <Tool label="Save project as"><SaveAs /></Tool>
        <Tool label="New print layout"><Layout /></Tool>
        <Tool label="Layout manager"><LayoutMgr /></Tool>
        <Tool label="Style manager"><Styles /></Tool>
        <Handle wide />
        <Tool label="Pan map" on><Hand /></Tool>
        <Tool label="Pan to selection"><PanTo /></Tool>
        <Tool label="Zoom in"><ZoomIn /></Tool>
        <Tool label="Zoom out"><ZoomOut /></Tool>
        <Tool label="Native zoom"><ZoomNative /></Tool>
      </Bar>
      <Bar>
        <Handle />
        <Tool label="Data source manager"><DataSource /></Tool>
        <Tool label="New GeoPackage layer"><NewGeoPackage /></Tool>
        <Tool label="New shapefile layer"><NewShape /></Tool>
        <Tool label="New SpatiaLite layer"><NewSpatiaLite /></Tool>
        <Tool label="New scratch layer"><NewMemory /></Tool>
        <Handle wide />
        <Tool label="Current edits"><EditsGray /></Tool>
        <Tool label="Toggle editing"><EditYellow /></Tool>
        <Tool label="Save edits"><SaveGray /></Tool>
        <Tool label="Add polygon"><PolyGray /></Tool>
        <Tool label="Vertex tool"><VertexGray /></Tool>
        <span className="flex w-3 justify-center opacity-40"><Caret /></span>
        <Tool label="Modify attributes"><AttrGray /></Tool>
        <Tool label="Delete selected"><TrashGray /></Tool>
      </Bar>
      <Bar h="h-[38px]">
        <Handle />
        <Tool label="QuickMapServices search"><QuickSearch /></Tool>
        <Tool label="QuickOSM"><OsmMap /></Tool>
      </Bar>
      <div className="flex min-h-0 flex-1">
        <aside className="flex w-[191px] shrink-0 flex-col">
          <DockTitle title="Browser" />
          <div className="flex h-[30px] shrink-0 items-center pl-[1px]">
            <Small label="Add layer"><AddLayer /></Small>
            <Small label="Refresh"><Refresh /></Small>
            <Small label="Filter"><Funnel /></Small>
            <Small label="Collapse all"><TreeArrow /></Small>
            <Small label="Properties"><InfoSmall /></Small>
          </div>
          <ul className="h-[376px] shrink-0 border-y border-r border-[#b4b4b4] bg-white">
            {browser.map(({ name, icon: Icon, open }) => (
              <li key={name} className="flex h-[19px] items-center">
                <span className="flex w-[22px] pl-[6px]">
                  {open && <svg viewBox="0 0 5 8" className="h-2 w-[5px]"><path d="M.5.5L5 4 .5 7.500z" fill="#555" /></svg>}
                </span>
                <Icon />
                <span className="ml-[6px] whitespace-nowrap">{name}</span>
              </li>
            ))}
          </ul>
          <div className="flex h-[5px] shrink-0 items-center justify-center">
            <svg viewBox="0 0 17 1" className="h-px w-[17px]"><path d="M0 .5h17" stroke="#aaa" strokeDasharray="1 2" /></svg>
          </div>
          <DockTitle title="Layers" />
          <div className="flex h-[30px] shrink-0 items-center pl-[1px]">
            <Small label="Layer styling"><Brush /></Small>
            <Small label="Add group"><AddGroup /></Small>
            <Small label="Map themes"><Eye /></Small>
            <Small label="Filter legend"><Funnel /></Small>
            <Small label="Filter by expression"><Epsilon /></Small>
            <span className="w-3 pl-[2px]"><Caret /></span>
            <Small label="Expand all"><TreeArrow down /></Small>
            <button type="button" aria-label="More" className="ml-auto w-[13px]">
              <svg viewBox="0 0 9 7" fill="none" className="h-[7px] w-[9px]"><path d="M1 .5l3 3-3 3M5 .5l3 3-3 3" stroke="#444" strokeWidth="1.200" /></svg>
            </button>
          </div>
          <ul className="flex-1 border-t border-r border-[#b4b4b4] bg-white">
            <LayerRow name="amenity_hospi..." sel chip swatch={<span className="size-4 border border-[#857a96] bg-[#b89fb9]" />} />
            <LayerRow name="amenity_hospi..." chip swatch={<span className="size-[7px] rounded-full border border-[#555] bg-[#ff9a1c]" />} />
            <LayerRow name="riverside_tracts" swatch={<span className="size-4 border border-[#8d3857] bg-[#e15989]" />} />
          </ul>
        </aside>
        <div className="flex w-[6px] shrink-0 items-center justify-center">
          <svg viewBox="0 0 1 17" className="h-[17px] w-px"><path d="M.5 0v17" stroke="#aaa" strokeDasharray="1 2" /></svg>
        </div>
        <main className="mt-px min-w-0 flex-1 overflow-hidden border-t border-l border-r border-[#b4b4b4] bg-white">
          <MapView />
        </main>
        <div className="w-[6px] shrink-0" />
        <aside className="mt-px w-[29px] shrink-0 border-t border-l border-[#b4b4b4] bg-white" />
      </div>
      <Dialog />
    </div>
  );
}
